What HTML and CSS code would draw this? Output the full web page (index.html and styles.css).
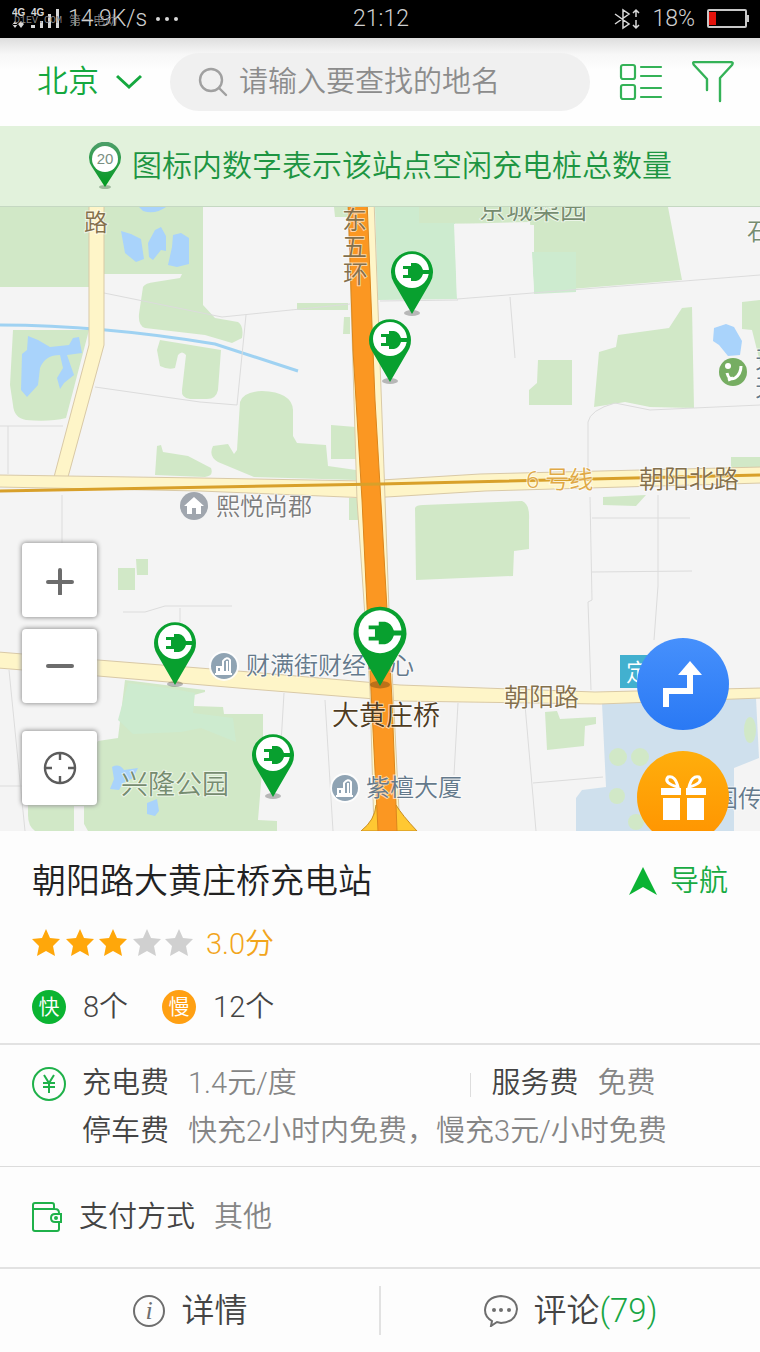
FILE: index.html
```html
<!DOCTYPE html>
<html lang="zh-CN">
<head>
<meta charset="utf-8">
<meta name="viewport" content="width=device-width, initial-scale=1">
<title>充电站地图</title>
<link rel="stylesheet" href="styles.css">
</head>
<body>
<div class="app">
  <div class="status">
    <div class="status-left">
      <svg class="signal" width="48" height="22" viewBox="0 0 48 22" fill="#d8d8d8">
        <text x="0" y="8" class="signal-text">4G</text>
        <text x="19" y="8" class="signal-text">4G</text>
        <path d="M3 13l3 4h-6zM3 20l3-4h-6zM9 13l3 3h-6zM9 20l3-4h-6zM19 17h4v3h-4zM28 13h3v7h-3zM36 6h3v14h-3zM44 1h3v19h-3z"/>
      </svg>
      <span>14.9K/s</span>
      <svg width="24" height="6" viewBox="0 0 24 6" fill="#d8d8d8"><circle cx="3" cy="3" r="2"/><circle cx="12" cy="3" r="2"/><circle cx="21" cy="3" r="2"/></svg>
    </div>
    <span class="clock">21:12</span>
    <div class="status-right">
      <svg width="26" height="22" viewBox="0 0 26 22" fill="none" stroke="#d8d8d8" stroke-width="1.5"><path d="M1 6l14 10-6 4V2l6 4L1 16M22 2v7M19 5l3-3 3 3M22 12v8M19 17l3 3 3-3"/></svg>
      <span>18%</span>
      <svg width="43" height="20" viewBox="0 0 43 20"><rect x="1" y="1" width="38" height="17" rx="1" fill="none" stroke="#c8c8c8" stroke-width="2"/><path fill="#c8c8c8" d="M40 6h2v7h-2z"/><path fill="#e3120b" d="M2 3h7v13H2z"/></svg>
    </div>
    <div class="watermark"><span class="wm-latin">D1EV.COM</span><span>第一电动</span></div>
  </div>

  <header class="header">
    <button class="city" type="button">北京
      <svg width="26" height="16" viewBox="0 0 26 16" fill="none" stroke="#15a83f" stroke-width="3"><path d="M1 2l12 11L25 2"/></svg>
    </button>
    <label class="search">
      <svg width="30" height="30" viewBox="0 0 30 30" fill="none" stroke="#a0a0a0" stroke-width="2.4" stroke-linecap="round"><circle cx="13" cy="13" r="11"/><path d="M21 21l7 7"/></svg>
      <input type="text" placeholder="请输入要查找的地名" aria-label="搜索地名">
    </label>
    <div class="tools">
      <button type="button" aria-label="列表">
        <svg width="44" height="38" viewBox="0 0 44 38" fill="none" stroke="#34b257" stroke-width="2.2" stroke-linecap="round"><rect x="2" y="2" width="14" height="14" rx="2"/><rect x="2" y="22" width="14" height="14" rx="2"/><path d="M22 4h20M22 13h20M22 25h20M22 34h20"/></svg>
      </button>
      <button type="button" aria-label="筛选">
        <svg width="42" height="42" viewBox="0 0 42 42" fill="none" stroke="#34b257" stroke-width="2.4" stroke-linecap="round" stroke-linejoin="round"><path d="M15 29V18L2 4Q0 1 3 1h35q4 0 2 3L28 17v23"/></svg>
      </button>
    </div>
  </header>

  <div class="notice">
    <svg width="34" height="48" viewBox="0 0 34 48">
      <defs><linearGradient id="tip" x1="0" y1="0" x2="0" y2="1"><stop offset="0" stop-color="#4f9f6b"/><stop offset="1" stop-color="#009a1f"/></linearGradient></defs>
      <ellipse cx="17" cy="45" rx="6" ry="2" fill="#9db89b"/>
      <path d="M17 45L4 25A16 16 0 1 1 30 25Z" fill="url(#tip)"/>
      <circle cx="17" cy="17" r="13" fill="#fff"/>
      <text x="17" y="22" class="notice-num">20</text>
    </svg>
    <span>图标内数字表示该站点空闲充电桩总数量</span>
  </div>

  <main class="map">
    <svg class="map-canvas" viewBox="0 207 760 624" preserveAspectRatio="xMidYMid slice" role="img" aria-label="地图">
      <defs>
        <g id="pin">
          <ellipse cx="0" cy="41" rx="8" ry="3" fill="#000" opacity=".25"/>
          <path fill="#08a02f" d="M0 42L-18 11A21 21 0 1 1 18 11Z"/>
          <circle cy="-1" r="17" fill="#fff"/>
          <path fill="#08a02f" d="M-1-9H4Q9-8 11-2H20V2H11Q9 8 4 9H-1V6H-9V3H-4V-3H-9V-6H-1Z"/>
        </g>
        <g id="tower">
          <circle r="15" fill="#fff" opacity=".8"/><circle r="13" fill="#8fa3b3"/>
          <path d="M-7 6V1h4v5zM-1 6V-5q4-5 7-1V6zM-9 8H8M3-5V6" fill="none" stroke="#fff" stroke-width="2"/>
        </g>
      </defs>
      <rect y="207" width="760" height="624" fill="#f4f4f4"/>

      <g fill="#d1e8c7">
        <path d="M0 207H89V287H0zM104 207H203V305L215 318 238 322Q244 326 242 338L232 343 205 335 145 328Q138 326 139 314L143 287Q145 283 155 282L180 278 182 274H104z"/>
        <path d="M13 330H89L66 418Q50 422 26 420 14 418 13 405L10 385z"/>
        <path d="M160 340L221 350 218 390Q216 400 205 399L190 399Q181 398 182 390L186 355Q182 350 178 355L175 368Q168 370 160 366L157 350z"/>
        <path d="M240 402Q243 392 262 391 292 392 293 410V436L297 443 326 445 328 466 356 470V480L254 477 218 462Q208 456 213 446L228 444 234 454 237 450z"/>
        <path d="M331 425L356 427V459H331zM297 303H348V310H297zM344 317h6v17h-7zM157 446l4-1 2 7 25 4 23 12Q214 476 205 477L155 475zM334 207h15v10h-14z"/>
        <path d="M419 207H668L682 280 534 292V225L419 223z"/>
        <path d="M538 360H572V405H529V390L537 383zM599 352L616 347 618 335 669 328 682 308 692 307 694 408 650 407 625 402 594 407zM742 302l18-2v62l-8-32-10-1zM731 457h29v13l-29 2z"/>
        <path d="M415 508Q416 505 423 505L522 501Q530 504 529 520V549L514 551 513 576 416 580zM603 497l43-2-10 11-33-1z"/>
        <path d="M118 568h17v22h-17zM136 559h12v16h-11zM349 498h10v22h-10z"/>
        <path d="M125 680L205 690V692L194 695V706L223 707 224 714 263 714V760L258 820 277 821V831H88L74 806 65 790 98 741 118 738z"/>
        <path d="M545 712l12-1 3 8 36-2v7l-11 2-1 20-37 4z"/>
        <path d="M28 800h46v31H35Q28 826 28 815z"/>
      </g>
      <g fill="#cdebcf">
        <path d="M375 207H419V223H455L457 299 378 300zM532 252h44v40l-42 2z"/>
        <path d="M128 683l40 5 27 5-2 20 40 5 3 24-35-14-20 4-48 2-15-14z"/>
      </g>
      <path d="M454 224L530 222 534 292 457 299z" fill="#f4f4f4"/>
      <path d="M74 806h10v25h-9z" fill="#f4f4f4"/>

      <path fill="#cfe0ed" d="M602 703L756 698 759 758 734 768V831H576V798L582 790 606 787z"/>
      <g fill="#d1e8c7"><circle cx="618" cy="757" r="9"/><circle cx="640" cy="757" r="9"/><circle cx="617" cy="796" r="8"/><ellipse cx="750" cy="730" rx="6" ry="13"/><circle cx="636" cy="822" r="8"/></g>

      <g fill="#a9d3fb">
        <path d="M121 231L131 234 141 239 144 259 136 262 125 253zM149 257L148 243 155 230 161 227 166 236 166 251 161 250 153 260zM168 265L172 247 173 235 181 233 189 238 189 264 177 267zM139 207H166Q155 215 143 211z"/>
        <path d="M28 336L38 340 50 347 69 345 73 338 79 337 82 353 67 355 74 375 64 383 60 389 57 378 63 368 60 355Q45 355 40 368L38 385 27 397 21 390 22 354 27 350z"/>
        <path d="M714 328l12-4 8 3 8 14-2 14-12 1-9-11-6-4z"/>
        <path d="M112 767q7-4 12 3l14-2-5 10-10 5-4 7-9-1 4-10zM147 803l10-4 2 12-4 5-8-2z"/>
      </g>
      <path d="M0 325Q100 325 215 344L298 371" fill="none" stroke="#9fd2f2" stroke-width="3"/>

      <g fill="none" stroke="#dcdcdc" stroke-width="1">
        <path d="M104 293L222 317 350 304M246 315L237 405 200 402 95 387M0 426H63M8 426V474M62 495V543M458 300L380 301M457 299L760 275M510 297L515 358M588 475V422Q590 410 615 403L650 410 760 405M590 497L592 600 588 602 591 690M658 495V586L654 640M592 518H690M592 572L692 571M9 670L25 831M284 693L280 760M325 700L333 831M458 703L454 775M525 705L536 831M533 783L603 777M123 612L145 612 165 606H232M180 608V625M0 786h22"/>
      </g>

      <g fill="#fef5c8" stroke="#d9c9a6" stroke-width="1">
        <path d="M89 200H104V345L68 477H54L89 345z"/>
        <path d="M-2 475L200 478 365 481 480 474 762 467V483L485 491 370 498 200 491-2 487z"/>
        <path d="M-2 652L98 660 250 672 400 685 595 692 762 688V698L600 704 400 701 250 689 98 676-2 668z"/>
        <path d="M348 200H374L384 470 389 610 393 690 400 831H374L370 690 357 500z"/>
      </g>
      <path fill="#ffc832" stroke="#c98d22" d="M361 831Q375 820 376 805H396Q402 815 417 831z"/>
      <path fill="#fb9722" stroke="#db861d" d="M348 200H367L375 400 382 520 387 610 392 700 397 831H378L371 690 362 500 353 350z"/>
      <path d="M0 491L380 484 760 475" fill="none" stroke="#d8a02a" stroke-width="3"/>

      <g class="road-label">
        <text x="84" y="231" class="t24">路</text>
        <text x="342" y="229" class="t26">东</text><text x="342" y="256" class="t26">五</text><text x="343" y="283" class="t26">环</text>
        <text x="526" y="488" class="t24 metro">6 号线</text>
        <text x="639" y="488" class="t26">朝阳北路</text>
        <text x="504" y="706" class="t26">朝阳路</text>
      </g>
      <g class="park-label">
        <text x="479" y="219" class="t27">京城梨园</text>
        <text x="121" y="794" class="t27">兴隆公园</text>
        <text x="747" y="240" class="t24">石</text>
      </g>
      <g class="poi-label">
        <text x="216" y="515" class="t24 gray">熙悦尚郡</text>
        <text x="246" y="674" class="t24">财满街财经中心</text>
        <text x="366" y="796" class="t24">紫檀大厦</text>
        <text x="714" y="807" class="t24">国传</text>
        <text x="755" y="368" class="t24">天</text><text x="755" y="396" class="t24">天</text>
      </g>
      <rect x="620" y="655" width="60" height="33" fill="#42b0cf"/>
      <text x="626" y="681" class="t24 sign">定</text>

      <circle cx="194" cy="506" r="14" fill="#a0a6ae"/>
      <path d="M194 497l-10 9h3v8h5v-6h4v6h5v-8h3z" fill="#fff"/>
      <use href="#tower" x="224" y="666"/>
      <use href="#tower" x="345" y="788"/>
      <circle cx="733" cy="372" r="14" fill="#76ad62"/>
      <circle cx="728" cy="366" r="3" fill="#fff"/><path d="M727 373q2 8 8 5 6-4 6-12M733 378l-5 2" fill="none" stroke="#fff" stroke-width="3"/>

      <use href="#pin" x="412" y="272"/>
      <use href="#pin" x="390" y="340"/>
      <use href="#pin" x="175" y="643"/>
      <use href="#pin" x="273" y="755"/>
      <use href="#pin" transform="translate(380 633) scale(1.260)"/>
      <text x="332" y="725" class="t27 place">大黄庄桥</text>
    </svg>

    <div class="zoom">
      <button type="button" aria-label="放大"><svg width="30" height="30" viewBox="0 0 30 30" stroke="#6c6c6c" stroke-width="4" stroke-linecap="round"><path d="M3 17h24M15 5v24"/></svg></button>
      <button type="button" aria-label="缩小"><svg width="30" height="30" viewBox="0 0 30 30" stroke="#6c6c6c" stroke-width="4" stroke-linecap="round"><path d="M3 15h24"/></svg></button>
      <button class="locate" type="button" aria-label="定位"><svg width="34" height="34" viewBox="0 0 34 34" fill="none" stroke="#5c5c5c" stroke-width="2.400"><circle cx="17" cy="17" r="15"/><path d="M17 2v7M17 25v7M2 17h7M25 17h7"/></svg></button>
    </div>
    <div class="fabs">
      <button class="fab route" type="button" aria-label="路线"><svg width="92" height="92" viewBox="0 0 92 92" fill="none"><path d="M29 69V53H53V35" stroke="#fff" stroke-width="6"/><path d="M53 23L65 37H41z" fill="#fff"/></svg></button>
      <button class="fab gift" type="button" aria-label="礼包"><svg width="92" height="92" viewBox="0 0 92 92" fill="#fff"><path d="M24 37h20v7H24zM49 37h20v7H49zM26 47h17v22H26zM50 47h17v22H50z"/><path d="M41 36Q38 24 31 26 26 32 41 36zM52 36Q55 24 62 26 67 32 52 36z" fill="none" stroke="#fff" stroke-width="3"/></svg></button>
    </div>
  </main>

  <section class="station">
    <div class="title-row">
      <h1>朝阳路大黄庄桥充电站</h1>
      <a class="nav" href="#navigate"><svg width="28" height="28" viewBox="0 0 28 28" fill="#0bb334"><path d="M14 0L28 28 14 20 0 28z"/></svg>导航</a>
    </div>
    <div class="rating">
      <svg width="162" height="30" viewBox="0 0 162 30" role="img" aria-label="3星">
        <defs><path id="star" d="M14 0L18 9 28 10 21 17 23 27 14 22 5 27 7 17 0 10 10 9z"/></defs>
        <g fill="#ffa70a"><use href="#star"/><use href="#star" x="34"/><use href="#star" x="67"/></g>
        <g fill="#d0d0d0"><use href="#star" x="101"/><use href="#star" x="133"/></g>
      </svg>
      <span>3.0分</span>
    </div>
    <div class="counts">
      <span class="badge fast">快</span><span class="count">8个</span>
      <span class="badge slow">慢</span><span class="count">12个</span>
    </div>
  </section>

  <section class="tariff">
    <svg width="34" height="34" viewBox="0 0 34 34" fill="none" stroke="#1fb14a" stroke-width="2"><circle cx="17" cy="17" r="16"/><path d="M12 8l5 8 5-8M11 16h12M11 20h12M17 16v10"/></svg>
    <div class="fees">
      <div class="fee-row">
        <div class="fee energy"><span class="label">充电费</span><span class="value">1.4元/度</span></div>
        <div class="fee service"><span class="label">服务费</span><span class="value">免费</span></div>
      </div>
      <div class="fee"><span class="label">停车费</span><span class="value">快充2小时内免费，慢充3元/小时免费</span></div>
    </div>
  </section>

  <section class="payment">
    <svg width="30" height="30" viewBox="0 0 30 30" fill="none" stroke="#1fb14a" stroke-width="2"><path d="M22 7V3q0-2-2-2H3Q1 1 1 3v24q0 2 2 2h22q2 0 2-2v-7M1 7h22q4 0 4 4v1"/><path d="M29 12h-6q-4 0-4 4t4 4h6z"/><circle cx="24" cy="16" r="1"/></svg>
    <div class="fee"><span class="label">支付方式</span><span class="value">其他</span></div>
  </section>

  <nav class="tabs">
    <a href="#detail">
      <svg width="34" height="34" viewBox="0 0 34 34"><circle cx="17" cy="17" r="15" fill="none" stroke="#6e6e6e" stroke-width="2"/><text x="17" y="25" class="info-i">i</text></svg>
      <span>详情</span>
    </a>
    <a href="#comments">
      <svg width="34" height="32" viewBox="0 0 34 32" fill="none" stroke="#6e6e6e" stroke-width="2"><path d="M8 26Q1 22 1 15 2 2 17 1 32 2 33 14 32 27 17 28L13 27 7 31z"/><g fill="#6e6e6e" stroke="none"><circle cx="10" cy="15" r="2"/><circle cx="17" cy="15" r="2"/><circle cx="25" cy="15" r="2"/></g></svg>
      <span>评论<span class="num">(79)</span></span>
    </a>
  </nav>
</div>
</body>
</html>
```
FILE: styles.css
```css
* { box-sizing: border-box; }
body {
  margin: 0;
  background: #fdfdfd;
  color: #444;
  font-family: Roboto, "Noto Sans CJK SC", sans-serif;
  font-weight: 350;
}
svg { display: block; flex: none; }
button {
  margin: 0;
  padding: 0;
  border: 0;
  background: none;
  color: inherit;
  font: inherit;
}
a { color: inherit; text-decoration: none; }
.app { display: flex; flex-direction: column; min-height: 100vh; }

.status {
  position: relative;
  display: grid;
  grid-template-columns: 1fr auto 1fr;
  align-items: center;
  height: 38px;
  padding: 0 10px 0 12px;
  background: #000;
  color: #d0d0d0;
  font-size: 23px;
  line-height: 38px;
}
.status-left { display: flex; align-items: center; gap: 8px; }
.status-right { display: flex; align-items: center; justify-content: flex-end; gap: 12px; }
.signal-text { font: 700 10px "Liberation Sans", sans-serif; }
.watermark {
  position: absolute;
  left: 14px;
  top: 12px;
  display: flex;
  gap: 7px;
  color: #858585;
  font-size: 12px;
  line-height: 18px;
}
.wm-latin { font-family: "Liberation Mono", monospace; font-size: 10px; }

.header {
  display: flex;
  align-items: center;
  padding: 15px 26px 15px 37px;
  background: linear-gradient(#dedede, #f7f7f7 16px, #fefefe 32px);
}
.city { display: flex; align-items: center; gap: 17px; color: #15a83f; font-size: 31px; line-height: 58px; }
.search {
  display: flex;
  flex: 1;
  align-items: center;
  gap: 11px;
  min-width: 0;
  height: 58px;
  margin: 0 29px 0 28px;
  padding: 0 28px;
  border-radius: 29px;
  background: #f0f0f0;
}
.search input {
  flex: 1;
  min-width: 0;
  padding: 0;
  border: 0;
  outline: 0;
  background: none;
  color: #555;
  font: inherit;
  font-size: 29px;
  line-height: 44px;
}
.search input::placeholder { color: #8c8c8c; opacity: 1; }
.tools { display: flex; align-items: center; gap: 29px; }

.notice {
  display: flex;
  align-items: center;
  justify-content: center;
  gap: 10px;
  min-height: 81px;
  padding: 0 8px;
  border-bottom: 1px solid #c5d8c2;
  background: #e2f2dc;
  color: #1d9542;
  font-size: 30px;
  line-height: 40px;
}
.notice-num { font: 15px "Liberation Sans", sans-serif; fill: #7a8f83; text-anchor: middle; }

.map { position: relative; flex: 1; min-height: 480px; overflow: hidden; }
.map-canvas { position: absolute; inset: 0; width: 100%; height: 100%; }
.map-canvas text { paint-order: stroke; stroke: #fff; stroke-opacity: .6; stroke-width: 2px; }
.t24 { font-size: 24px; }
.t26 { font-size: 25px; }
.t27 { font-size: 27px; }
.road-label { fill: #84704c; }
.map-canvas .metro { fill: #e0a945; }
.park-label { fill: #768c70; }
.poi-label { fill: #64798b; }
.gray { fill: #7d7d7d; }
.place { fill: #4e3b22; }
.map-canvas .sign { fill: #fff; stroke: none; }

.zoom { position: absolute; left: 22px; bottom: 26px; display: flex; flex-direction: column; gap: 12px; }
.zoom button {
  display: grid;
  place-items: center;
  width: 75px;
  height: 74px;
  border-radius: 4px;
  background: #fff;
  box-shadow: 0 0 4px 1px #999;
}
.zoom .locate { margin-top: 16px; }
.fabs { position: absolute; right: 31px; top: 431px; display: flex; flex-direction: column; gap: 21px; }
.fab { width: 92px; height: 92px; border-radius: 50%; }
.route { background: linear-gradient(#4690fc, #2a79f4); }
.gift { background: linear-gradient(#ffae0c, #ff9300); }

.station { padding: 25px 32px 17px; border-bottom: 2px solid #e2e2e2; }
.title-row { display: flex; align-items: center; justify-content: space-between; gap: 16px; }
h1 { margin: 0; color: #222; font-size: 34px; font-weight: 350; line-height: 50px; }
.nav { display: flex; flex: none; align-items: center; gap: 13px; color: #18ab42; font-size: 29px; line-height: 40px; }
.rating { display: flex; align-items: center; gap: 12px; margin-top: 19px; color: #f2a51c; font-size: 29px; line-height: 38px; }
.counts { display: flex; align-items: center; margin-top: 25px; font-size: 29px; line-height: 38px; }
.badge {
  width: 34px;
  height: 34px;
  margin-right: 17px;
  border-radius: 50%;
  color: #fff;
  font-size: 21px;
  line-height: 34px;
  text-align: center;
}
.fast { background: #0bb432; }
.slow { background: #ffa013; }
.count { margin-right: 34px; }

.tariff {
  display: flex;
  align-items: flex-start;
  gap: 16px;
  padding: 14px 32px 11px;
  border-bottom: 1px solid #dcdcdc;
}
.tariff > svg { margin-top: 8px; }
.fees { flex: 1; min-width: 0; }
.fee-row { display: flex; }
.fee { display: flex; gap: 19px; font-size: 29px; line-height: 48px; }
.label { flex: none; }
.value { color: #858585; }
.energy { flex: 0 0 60%; }
.service { position: relative; align-items: center; padding-left: 22px; }
.service::before { content: ""; position: absolute; left: 0; top: 14px; width: 1px; height: 24px; background: #ddd; }

.payment { display: flex; align-items: center; gap: 17px; padding: 26px 32px; border-bottom: 2px solid #e2e2e2; }

.tabs { display: flex; align-items: center; padding: 17px 0; }
.tabs a { display: flex; flex: 1; align-items: center; justify-content: center; gap: 16px; font-size: 33px; line-height: 49px; }
.tabs a + a { border-left: 2px solid #e2e2e2; }
.info-i { font: italic 26px "Liberation Serif", serif; fill: #6e6e6e; text-anchor: middle; }
.num { color: #18a644; }
```
